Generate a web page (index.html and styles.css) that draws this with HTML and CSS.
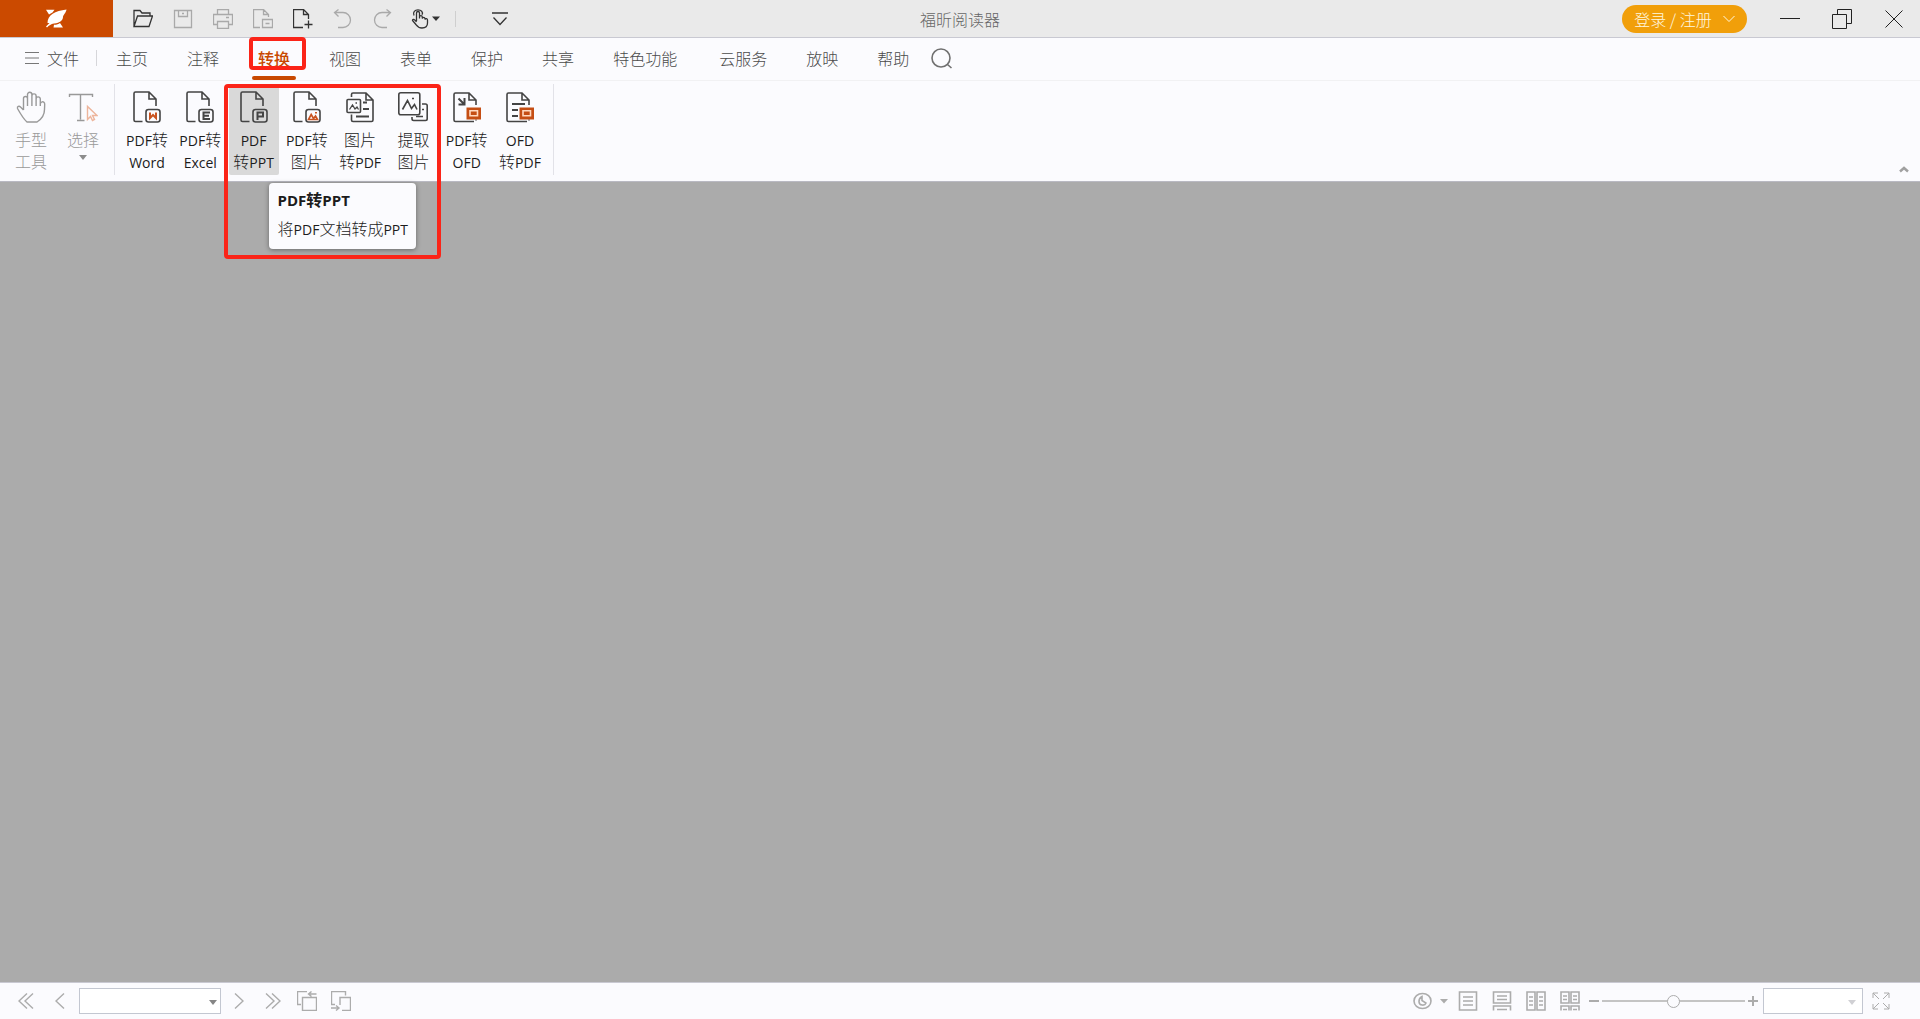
FILE: index.html
```html
<!DOCTYPE html>
<html lang="zh-CN">
<head>
<meta charset="utf-8">
<title>福昕阅读器</title>
<link rel="stylesheet" href="styles.css">
</head>
<body>
<header class="titlebar">
  <div class="quick">
    <button class="logo" aria-label="福昕"><svg width="22" height="20" viewBox="0 0 22 20"><path fill="#fff" d="M0 .8h8.500L6.500 3.500 3 5.500zM20.500.5C20 4 17 6 17 8c0 3-3 6-9 6.500-3 .5-5 2-7 4L0 17.500 3.500 14H1.500C1.500 6 9 2 20.500.5zM8 15.800c3 0 4.500-.6 6-1.800l3 4.500H7.500z"/></svg></button>
    <nav class="tools" aria-label="快速访问">
      <button class="tool dark" aria-label="打开"><svg width="20" height="20" viewBox="0 0 20 20"><path d="M1 17.500V1.500h6l2 2.500h8v3M1 17.500 4.500 7h15L16 17.500z"/></svg></button>
      <button class="tool" aria-label="保存"><svg width="20" height="20" viewBox="0 0 20 20"><path d="M1.500 1.500h17v17h-17zM5.500 1.500v6h9v-6M9 4.500h2"/></svg></button>
      <button class="tool" aria-label="打印"><svg width="20" height="20" viewBox="0 0 20 20"><path d="M4.500 5.500v-5h11v5M4.500 15.500h-4v-10h19v10h-4M4.500 12.500h11v7h-11zM13 8.500h3"/></svg></button>
      <button class="tool" aria-label="批量打印"><svg width="20" height="20" viewBox="0 0 20 20"><path d="M7 18.500H.5V.5h10l5 5V8M10.500.5v5h5M9.500 10.500h10v8h-10zM12.500 14.500h4"/></svg></button>
      <button class="tool dark" aria-label="新建"><svg width="20" height="20" viewBox="0 0 20 20"><path d="M10 18.500H.5V.5h10l5 5V10M10.500.5v5h5M15.500 11.500v8M11.500 15.500h8"/></svg></button>
      <button class="tool" aria-label="撤销"><svg width="20" height="20" viewBox="0 0 20 20"><path d="M5.500.5l-4 3 4 4M1.500 3.500h8.500a7.500 7.500 0 0 1 0 15H5"/></svg></button>
      <button class="tool" aria-label="重做"><svg width="20" height="20" viewBox="0 0 20 20"><path d="M13.500.5l4 3-4 4M17.500 3.500H9a7.500 7.500 0 0 0 0 15h5"/></svg></button>
      <button class="tool dark touch" aria-label="触摸模式"><svg width="30" height="20" viewBox="0 0 30 20"><path d="M5.500 12V4a1.500 1.500 0 0 1 3 0v5.500V8a1.400 1.400 0 0 1 2.800 0v1.500a1.400 1.400 0 0 1 2.700 0v1a1.300 1.300 0 0 1 2.500.5v3c0 3-2 5-5.500 5-4 0-5-2-6.500-4L1.500 11.500c0-2 2-1.500 4 1.500M3 6.500C1.500 3 4 .8 7 .8s5.500 2.200 4 5"/><path class="solid" d="M21 7.500h8l-4 4.500z"/></svg></button>
      <span class="rule"></span>
      <button class="tool dark more" aria-label="自定义"><svg width="16" height="14" viewBox="0 0 16 14"><path d="M0 1h16M1.500 5.500l6.500 7 6.500-7"/></svg></button>
    </nav>
  </div>
  <h1 class="title">福昕阅读器</h1>
  <div class="window">
    <button class="login">登录 / 注册<svg width="12" height="8" viewBox="0 0 12 8"><path d="M.5 1 6 6.500 11.500 1"/></svg></button>
    <button class="win" aria-label="最小化"><svg width="20" height="20" viewBox="0 0 20 20"><path d="M0 9.500h20"/></svg></button>
    <button class="win" aria-label="还原"><svg width="20" height="20" viewBox="0 0 20 20"><path d="M.5 5.500h14v14H.5zM5.500 5.500v-5h14v14h-5"/></svg></button>
    <button class="win" aria-label="关闭"><svg width="18" height="18" viewBox="0 0 18 18"><path d="M.5.5l17 17M17.500.5l-17 17"/></svg></button>
  </div>
</header>

<nav class="tabs" aria-label="菜单">
  <button class="file"><svg width="14" height="12" viewBox="0 0 14 12"><path d="M0 .5h14M0 6h14M0 11.500h14"/></svg>文件</button>
  <a class="tab" href="#home">主页</a>
  <a class="tab" href="#comment">注释</a>
  <a class="tab active" href="#convert">转换</a>
  <a class="tab" href="#view">视图</a>
  <a class="tab" href="#form">表单</a>
  <a class="tab" href="#protect">保护</a>
  <a class="tab" href="#share">共享</a>
  <a class="tab wide" href="#features">特色功能</a>
  <a class="tab" href="#cloud">云服务</a>
  <a class="tab" href="#present">放映</a>
  <a class="tab" href="#help">帮助</a>
  <button class="search" aria-label="搜索"><svg width="22" height="22" viewBox="0 0 22 22"><circle cx="10" cy="10" r="9"/><path d="M16.500 16.500l4 3.500"/></svg></button>
</nav>

<section class="ribbon" aria-label="转换">
  <div class="group basic">
    <button class="cmd muted"><svg width="30" height="32" viewBox="0 0 30 32"><path d="M7.500 19V7.500a2 2 0 0 1 4 0V15M11.500 8V3.500a2.200 2.200 0 0 1 4.400 0V15M15.900 5a2.100 2.100 0 0 1 4.200 0v10M20.100 8a2.100 2.100 0 0 1 4.200 0v7M7.500 19l-3-3c-1.500-1.500-3.500-.5-3 1.500C4 22 7.500 28 11 31h10c4-2.500 7.500-6 7.500-12.500 0-2.500.5-5 0-6.500-1-2-4-1.500-4.200 1"/></svg><span class="latin"><b>手型</b></span><span class="latin"><b>工具</b></span></button>
    <button class="cmd muted"><svg width="30" height="32" viewBox="0 0 30 32"><path d="M1.500 6V3.500h23V6M12.500 3.500v25M9 29.500h7.500"/><path class="peach" d="M19.500 15.500v13l3-3 2 4 2-1-2-4h4.500z"/></svg><span class="latin"><b>选择</b></span><i class="caret"></i></button>
  </div>
  <div class="group convert">
    <button class="cmd"><svg width="30" height="32" viewBox="0 0 30 32"><path d="M10.500 30.500H3.500q-1.500 0-1.500-1.500V2.500Q2 1 3.500 1H17l7 7v7M17 1v7h7"/><rect x="14" y="18.500" width="14" height="12.500" rx="2.500"/><path class="accent bold" d="M18 21.500v5.500l3-3 3 3v-5.500"/></svg><span class="latin">PDF<b>转</b></span><span class="latin">Word</span></button>
    <button class="cmd"><svg width="30" height="32" viewBox="0 0 30 32"><path d="M10.500 30.500H3.500q-1.500 0-1.500-1.500V2.500Q2 1 3.500 1H17l7 7v7M17 1v7h7"/><rect x="14" y="18.500" width="14" height="12.500" rx="2.500"/><path class="bold" d="M25 21.500h-6.500V28H25M18.500 24.800H24"/></svg><span class="latin">PDF<b>转</b></span><span class="latin">Excel</span></button>
    <div class="slot">
      <button class="cmd hovered" aria-describedby="ppt-tip"><svg width="30" height="32" viewBox="0 0 30 32"><path d="M10.500 30.500H3.500q-1.500 0-1.500-1.500V2.500Q2 1 3.500 1H17l7 7v7M17 1v7h7"/><rect x="14" y="18.500" width="14" height="12.500" rx="2.500"/><path class="bold" d="M18.500 29v-7.500H24v4h-5"/></svg><span class="latin">PDF</span><span class="latin"><b>转</b>PPT</span></button>
      <div class="tip" id="ppt-tip" role="tooltip"><strong class="latin">PDF<b>转</b>PPT</strong><span class="latin"><b>将</b>PDF<b>文档转成</b>PPT</span></div>
    </div>
    <button class="cmd"><svg width="30" height="32" viewBox="0 0 30 32"><path d="M10.500 30.500H3.500q-1.500 0-1.500-1.500V2.500Q2 1 3.500 1H17l7 7v7M17 1v7h7"/><rect x="14" y="18.500" width="14" height="12.500" rx="2.500"/><path class="accent" d="M16.500 28.500l2.700-5 2.300 4 2-2.500 2 3.500zM23 21.800h2"/></svg><span class="latin">PDF<b>转</b></span><span class="latin"><b>图片</b></span></button>
    <button class="cmd"><svg width="30" height="32" viewBox="0 0 30 32"><path d="M6.500 6V3.500Q6.500 2 8 2h13l7 7v20q0 1.500-1.500 1.500H8q-1.500 0-1.500-1.500v-5.500M21 2v7h7"/><path class="bold" d="M18 11.500h4M18 18h6M11 25.500h13"/><rect x="2" y="8.500" width="13.500" height="13" rx="1"/><path class="thin" d="M4.500 18.500 7.500 14l2.500 4 2-2 1.500 2.500M10.500 12h1.500"/></svg><span class="latin"><b>图片</b></span><span class="latin"><b>转</b>PDF</span></button>
    <button class="cmd"><svg width="30" height="32" viewBox="0 0 30 32"><rect x=".8" y="1.800" width="21" height="22" rx="2"/><path d="M4.500 18.500l5-9 4 8 3-4 2.500 5M14 7.500h2M24 13h3.500q1.700 0 1.700 1.700v13.100q0 1.700-1.700 1.700H15.700q-1.700 0-1.700-1.700V26M24 18.500h2M18 25.500h7"/></svg><span class="latin"><b>提取</b></span><span class="latin"><b>图片</b></span></button>
    <button class="cmd"><svg width="30" height="32" viewBox="0 0 30 32"><path d="M22 30.500H3.500q-1.500 0-1.500-1.500V3.500Q2 2 3.500 2H17l7 7v5M17 2v7h7M24 28.500v1"/><path class="bold" d="M6.500 7.500l5.500 5.500M12.500 7v6.500H6.500"/><path class="block" d="M14.500 16.500H29v12H14.500z"/><path class="inset" d="M18 19.800h7.500v5H18z"/></svg><span class="latin">PDF<b>转</b></span><span class="latin">OFD</span></button>
    <button class="cmd"><svg width="30" height="32" viewBox="0 0 30 32"><path d="M22 30.500H3.500q-1.500 0-1.500-1.500V3.500Q2 2 3.500 2H17l7 7v5M17 2v7h7M24 28.500v1"/><path d="M7 13h13M7 19h6M7 25h6" class="bold"/><path class="block" d="M14.500 16.500H29v12H14.500z"/><path class="inset" d="M18 19.800h7.500v5H18z"/></svg><span class="latin">OFD</span><span class="latin"><b>转</b>PDF</span></button>
    <span class="mark"></span>
  </div>
  <button class="collapse" aria-label="折叠功能区"><svg width="10" height="7" viewBox="0 0 10 7"><path d="M1 5.500l4-3.500 4 3.500"/></svg></button>
</section>

<main class="canvas"></main>

<footer class="status">
  <div class="pager">
    <button class="nav" aria-label="首页"><svg width="16" height="16" viewBox="0 0 16 16"><path d="M9 .5 1 8l8 7.500M15 .5 7 8l8 7.500"/></svg></button>
    <button class="nav" aria-label="上一页"><svg width="10" height="16" viewBox="0 0 10 16"><path d="M9 .5 1 8l8 7.500"/></svg></button>
    <span class="pick page"><select aria-label="页码"><option></option></select></span>
    <button class="nav" aria-label="下一页"><svg width="10" height="16" viewBox="0 0 10 16"><path d="M1 .5 9 8l-8 7.500"/></svg></button>
    <button class="nav" aria-label="末页"><svg width="16" height="16" viewBox="0 0 16 16"><path d="M1 .5 9 8l-8 7.500M7 .5 15 8l-8 7.500"/></svg></button>
    <button class="nav" aria-label="上一视图"><svg width="20" height="20" viewBox="0 0 20 20"><path d="M4 13.500H.5V.5H10M5.500 6.500h14v13h-14zM19.500 3h-8M14.500.5 11.500 3l3 2.500"/></svg></button>
    <button class="nav" aria-label="下一视图"><svg width="20" height="20" viewBox="0 0 20 20"><path d="M4 13.500H.5V.5h14v4M9 14V6.500h10.500v13H11M0 17h8M5 14.500 8 17l-3 2.500"/></svg></button>
  </div>
  <div class="zoom">
    <button class="nav eye" aria-label="护眼模式"><svg width="36" height="18" viewBox="0 0 36 18"><ellipse cx="9.500" cy="9" rx="8.500" ry="7.500"/><path d="M9 4.500v4l4 2.500c-1 3-7 3-7-1.500C6 7 7 5.500 9 4.500z"/><path class="solid" d="M27 7h8l-4 4.500z"/></svg></button>
    <button class="nav" aria-label="单页"><svg width="20" height="20" viewBox="0 0 20 20"><path d="M1.500 1h17v18h-17zM5 6h10M5 10h10M5 14h10"/></svg></button>
    <button class="nav" aria-label="连续"><svg width="20" height="20" viewBox="0 0 20 20"><path d="M1.500 1h17v11h-17zM5 5h10M5 8.500h10M1.500 19.500V15h17v4.500M5 18.500h10"/></svg></button>
    <button class="nav" aria-label="双页"><svg width="20" height="20" viewBox="0 0 20 20"><path d="M1 1h8v18H1zM11 1h8v18h-8zM3 6h4M3 10h4M3 14h4M13 6h4M13 10h4M13 14h4"/></svg></button>
    <button class="nav" aria-label="连续双页"><svg width="20" height="20" viewBox="0 0 20 20"><path d="M1 1h8v11H1zM11 1h8v11h-8zM3 5h4M3 8.500h4M13 5h4M13 8.500h4M1 19.500V15h8v4.500M11 19.500V15h8v4.500M3 18.500h4M13 18.500h4"/></svg></button>
    <button class="step" aria-label="缩小"><svg width="10" height="10" viewBox="0 0 10 10"><path d="M0 5h10"/></svg></button>
    <input class="slider" type="range" min="0" max="100" value="50" aria-label="缩放">
    <button class="step" aria-label="放大"><svg width="10" height="10" viewBox="0 0 10 10"><path d="M0 5h10M5 0v10"/></svg></button>
    <span class="pick scale"><select aria-label="缩放比例"><option></option></select></span>
    <button class="full" aria-label="全屏"><svg width="18" height="18" viewBox="0 0 18 18"><path d="M7 7 1 1M1 6V1h5M11 7l6-6M12 1h5v5M7 11l-6 6M1 12v5h5M11 11l6 6M17 12v5h-5"/></svg></button>
  </div>
</footer>
</body>
</html>
```
FILE: styles.css
```css
*,
*::before,
*::after {
  box-sizing: border-box;
}

body {
  margin: 0;
  min-height: 100vh;
  display: flex;
  flex-direction: column;
  background: #fbfbfe;
  color: #4a4a4a;
  font: 300 16px/22px "Noto Sans CJK SC", sans-serif;
}

button {
  display: flex;
  align-items: center;
  justify-content: center;
  padding: 0;
  border: 0;
  background: none;
  color: inherit;
  font: inherit;
}

svg {
  display: block;
  flex: none;
  fill: none;
  stroke: currentColor;
}

/* Title bar */
.titlebar {
  display: grid;
  grid-template-columns: 1fr auto 1fr;
  height: 38px;
  background: #eaeaea;
  border-bottom: 1px solid #c9c9d2;
}

.quick,
.tools,
.window {
  display: flex;
  align-items: center;
}

.quick {
  align-items: stretch;
}

.logo {
  width: 113px;
  background: #cb4a00;
}

.logo svg {
  stroke: none;
}

.tools {
  padding-left: 10px;
}

.tool {
  width: 40px;
  height: 36px;
  color: #a9a9a9;
}

.dark {
  color: #333;
}

.tool svg {
  stroke-width: 1.3;
}

.touch {
  width: 45px;
}

.solid {
  fill: currentColor;
  stroke: none;
}

.rule {
  width: 1px;
  height: 16px;
  margin: 0 24px 0 7px;
  background: #cfcfcf;
}

.title {
  align-self: center;
  margin: 0;
  color: #666;
  font-size: 16px;
  font-weight: 300;
}

.window {
  justify-content: flex-end;
}

.login {
  width: 125px;
  height: 28px;
  gap: 11px;
  margin-right: 17px;
  border-radius: 14px;
  background: #f19f0a;
  color: #fff8e0;
}

.win {
  width: 52px;
  height: 36px;
  color: #222;
}

/* Menu tabs */
.tabs {
  display: flex;
  align-items: flex-start;
  height: 43px;
  padding-left: 25px;
  border-bottom: 1px solid #f1f1f3;
}

.file {
  gap: 8px;
  height: 40px;
  padding-right: 18px;
  margin-right: 19px;
  position: relative;
}

.file::after {
  content: "";
  position: absolute;
  right: 0;
  top: 12px;
  width: 1px;
  height: 16px;
  background: #d6d6da;
}

.file svg {
  color: #777;
}

.tab {
  display: flex;
  align-items: center;
  height: 40px;
  margin-right: 39px;
  color: inherit;
  text-decoration: none;
}

.wide {
  margin-right: 42px;
}

.active {
  position: relative;
  color: #c84800;
  font-weight: 500;
}

.active::before {
  content: "";
  position: absolute;
  left: -6px;
  bottom: -2px;
  width: 44px;
  height: 4px;
  border-radius: 2px;
  background: #c84800;
}

.active::after {
  content: "";
  position: absolute;
  left: -9px;
  top: -1px;
  width: 57px;
  height: 33px;
  border: 4px solid #fb2418;
  border-radius: 4px;
}

.search {
  height: 42px;
  margin-left: -17px;
  color: #707070;
}

.search svg {
  stroke-width: 1.6;
}

/* Ribbon */
.ribbon {
  display: flex;
  align-items: flex-start;
  height: 101px;
  padding-top: 3px;
  border-bottom: 1px solid #b9b9c2;
}

.group {
  display: flex;
  border-right: 1px solid #e2e2e8;
}

.basic {
  padding: 0 6px;
  gap: 2px;
}

.convert {
  position: relative;
  justify-content: space-between;
  width: 439px;
  padding: 0 8px 0 7px;
}

.cmd {
  flex-direction: column;
  justify-content: flex-start;
  width: 50px;
  height: 91px;
  padding-top: 7px;
  color: #1c1c1c;
  white-space: nowrap;
}

.cmd svg {
  margin-bottom: 7px;
  color: #444;
  stroke-width: 1.6;
}

.muted,
.muted svg {
  color: #999;
}

.muted svg {
  stroke-width: 1.4;
}

.peach {
  stroke: #edb59c;
}

.accent {
  stroke: #c95320;
}

.thin {
  stroke-width: 1.3;
}

.bold {
  stroke-width: 2;
}

.block {
  fill: #c54e14;
  stroke: none;
}

.inset {
  stroke: #ffd9c0;
}

.latin {
  font-family: "Open Sans", "Noto Sans CJK SC", sans-serif;
  font-size: 14px;
  font-weight: 400;
}

.latin b {
  font-family: "Noto Sans CJK SC", sans-serif;
  font-size: 16px;
  font-weight: 300;
  line-height: 16px;
}

.caret {
  margin-top: 3px;
  border: 4px solid transparent;
  border-top: 5px solid #8c8c8c;
  border-bottom: 0;
}

.hovered {
  border-radius: 2px;
  background: #d9d9d9;
}

.slot {
  position: relative;
}

.tip {
  position: absolute;
  z-index: 2;
  left: 40px;
  top: 99px;
  display: flex;
  flex-direction: column;
  gap: 8px;
  padding: 6px 8px 8px 9px;
  border-radius: 4px;
  background: #fbfbfe;
  box-shadow: 0 1px 5px rgba(0, 0, 0, 0.4);
  color: #1c1c1c;
  white-space: nowrap;
}

.tip strong,
.tip strong b {
  font-weight: 700;
}

.tip strong {
  font-size: 15px;
}

.mark {
  position: absolute;
  z-index: 3;
  left: 109px;
  top: 0;
  width: 217px;
  height: 175px;
  border: 4px solid #fb2418;
  border-radius: 4px;
}

.collapse {
  align-self: flex-end;
  margin: 0 11px 8px auto;
  color: #a0a0a0;
}

.collapse svg {
  stroke-width: 2.5;
}

.canvas {
  flex: 1;
  background: #ababab;
}

/* Status bar */
.status {
  display: flex;
  justify-content: space-between;
  height: 37px;
  border-top: 1px solid #c9c9d2;
  color: #acacac;
}

.pager,
.zoom {
  display: flex;
  align-items: center;
}

.pager {
  padding-left: 9px;
}

.nav {
  width: 34px;
  height: 34px;
  stroke-width: 1.4;
}

.zoom .nav svg {
  stroke-width: 1.6;
}

.eye {
  width: 38px;
  margin-right: 1px;
}

.pick {
  position: relative;
  height: 26px;
}

.pick select {
  width: 100%;
  height: 100%;
  appearance: none;
  border: 1px solid #c3c7d1;
  border-radius: 0;
  background: #fff;
  font: inherit;
}

.pick::after {
  content: "";
  position: absolute;
  right: 4px;
  top: 12px;
  border: 4px solid transparent;
  border-top: 5px solid #858585;
  border-bottom: 0;
}

.page {
  width: 142px;
  margin: 0 1px 0 2px;
}

.scale {
  width: 100px;
  margin: 0 9px 0 5px;
}

.scale::after {
  right: 7px;
  border-top-color: #d0d0d4;
}

.zoom {
  padding-right: 30px;
}

.nav + .step {
  margin-left: 2px;
}

.step {
  height: 34px;
}

.step svg {
  stroke-width: 2;
}

.slider {
  width: 143px;
  height: 14px;
  margin: 0 3px;
  appearance: none;
  background: linear-gradient(#c4c4c4, #c4c4c4) center / 100% 2px no-repeat;
}

.slider::-webkit-slider-thumb {
  appearance: none;
  width: 13px;
  height: 13px;
  border: 1px solid #acacac;
  border-radius: 50%;
  background: #fbfbfe;
}
```
